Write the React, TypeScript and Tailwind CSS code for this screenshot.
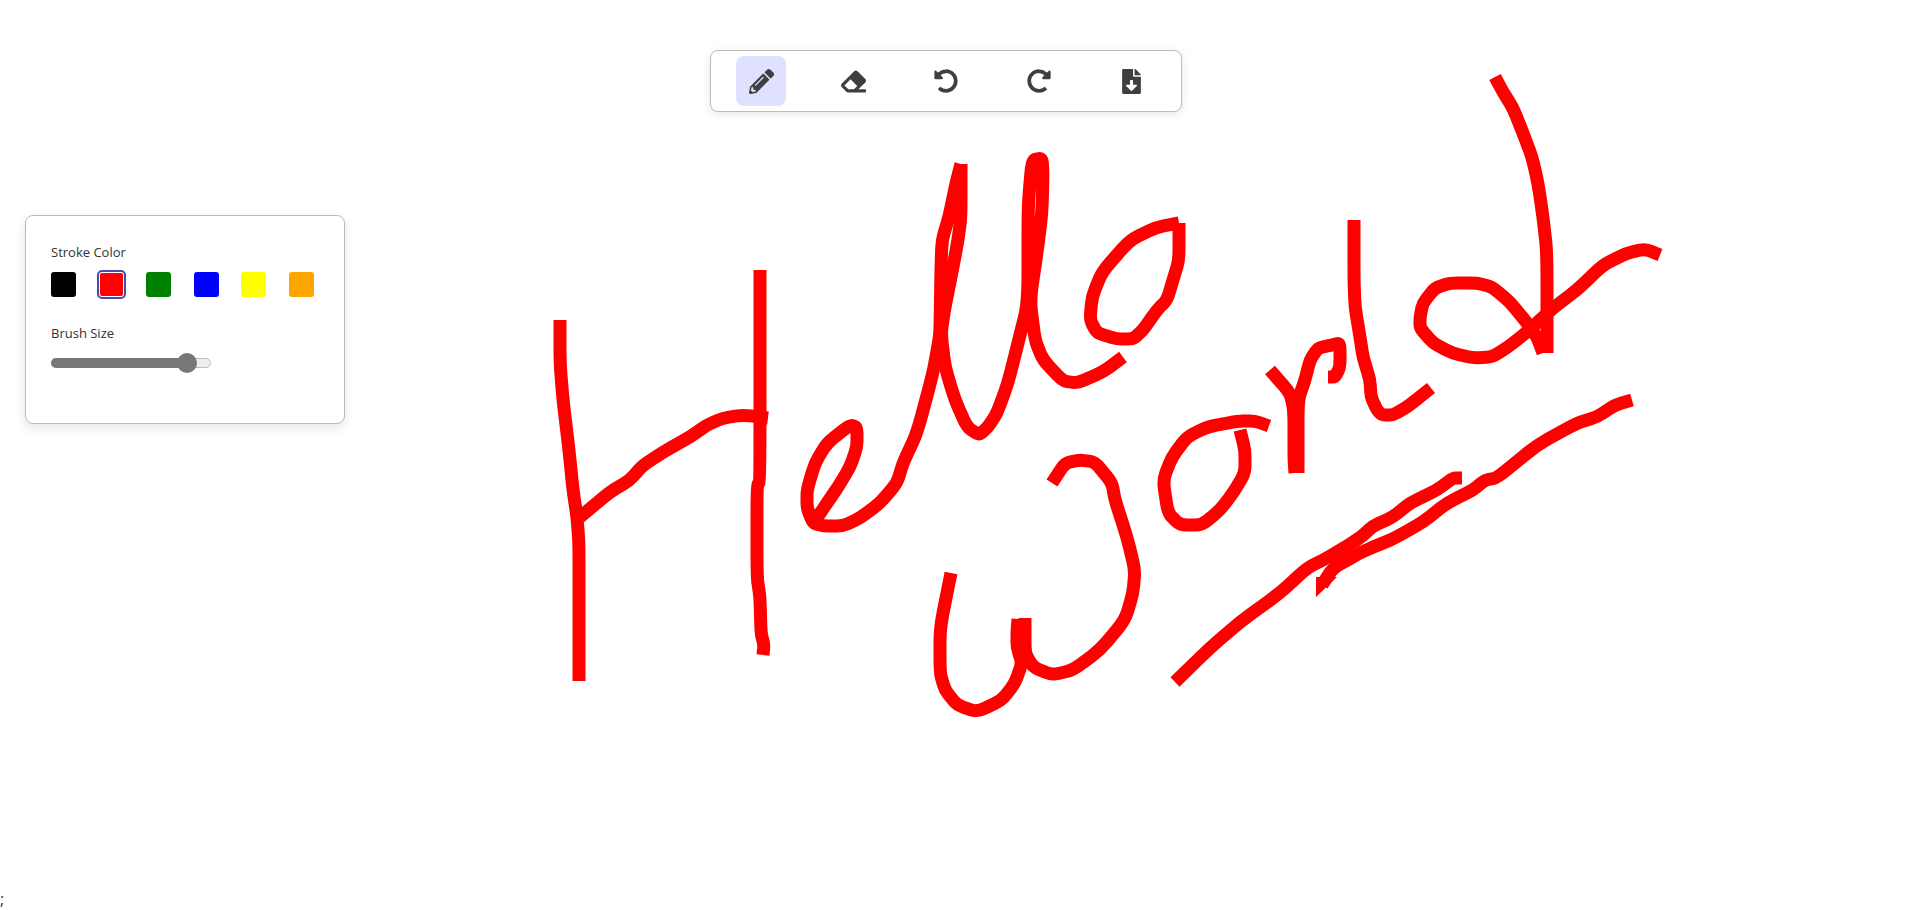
import { FaEraser, FaFileDownload, FaPencilAlt, FaRedoAlt, FaUndoAlt } from "react-icons/fa";

const strokes: number[][][] = [
  // H
  [[560,320],[560,363],[563,400],[569,450],[573,490],[577,517],[579,543],[579,600],[579,681]],
  [[580,517],[610,492],[630,480],[643,465],[670,448],[690,437],[707,425],[723,418],[743,415],[768,418]],
  [[760,270],[760,480],[757,487],[757,577],[760,597],[761,633],[764,645],[763,655]],
  // e + first l + second l
  [[817,518],[827,503],[838,487],[850,467],[857,447],[857,427],[850,425],[827,443],[815,463],[807,490],[807,508],[813,523],[823,526],[843,526],[860,518],[880,503],[897,483],[903,463],[917,433],[933,373],[939,340],[940,330],[941,267],[942,240],[949,217],[956,183],[961,164]],
  [[961,164],[961,217],[958,240],[953,267],[945,307],[941,333],[945,367],[955,400],[967,427],[979,435],[988,427],[997,413],[1008,383],[1017,347],[1028,303],[1028,207],[1032,160],[1042,158],[1043,173],[1042,213],[1037,253],[1030,300],[1035,340],[1043,360],[1063,381],[1077,383],[1103,372],[1123,357]],
  // o
  [[1179,223],[1179,260],[1173,280],[1167,300],[1157,310],[1143,330],[1133,339],[1117,339],[1097,333],[1090,320],[1092,297],[1102,272],[1130,240],[1157,227],[1179,223]],
  // W
  [[951,573],[940,628],[940,673],[945,690],[957,705],[977,712],[1002,700],[1015,683],[1022,663],[1017,647],[1017,632],[1018,619]],
  [[1025,618],[1025,653],[1033,667],[1052,675],[1073,670],[1100,650],[1125,620],[1133,593],[1135,570],[1127,537],[1115,500],[1112,483],[1095,462],[1080,460],[1065,463],[1052,483]],
  // o of World
  [[1240,430],[1245,450],[1245,473],[1233,493],[1220,510],[1202,525],[1180,525],[1168,513],[1163,480],[1172,457],[1187,437],[1207,427],[1238,421],[1255,421],[1269,426]],
  // r
  [[1270,370],[1290,393],[1294,410],[1294,460],[1295,473]],
  [[1298,473],[1298,400],[1305,380],[1310,360],[1318,348],[1332,345],[1340,343],[1340,367],[1335,377],[1328,377]],
  // l
  [[1354,220],[1354,280],[1355,307],[1360,337],[1363,357],[1370,380],[1371,397],[1377,410],[1382,415],[1393,415],[1407,407],[1431,388]],
  // d
  [[1495,77],[1503,92],[1513,108],[1523,133],[1532,157],[1538,183],[1543,217],[1547,253],[1547,353]],
  [[1543,353],[1537,337],[1527,323],[1510,302],[1492,287],[1477,283],[1450,283],[1435,288],[1423,303],[1420,317],[1420,328],[1433,343],[1452,353],[1473,358],[1492,357],[1508,347],[1527,332],[1553,308],[1577,290],[1603,265],[1627,253],[1645,249],[1660,255]],
  // underline
  [[1175,682],[1210,648],[1240,622],[1280,593],[1307,568],[1327,558],[1360,538],[1373,526],[1393,517],[1410,503],[1437,490],[1453,478],[1462,478]],
  [[1322,585],[1333,568],[1360,553],[1373,547],[1393,539],[1423,522],[1447,503],[1473,490],[1485,480],[1497,478],[1537,445],[1577,423],[1597,417],[1615,405],[1632,400]],
];

function toPath(s: number[][]) {
  let d = `M${s[0][0]} ${s[0][1]}`;
  for (let i = 1; i < s.length - 1; i++) {
    const [x, y] = s[i];
    const [px, py] = s[i - 1];
    const [nx, ny] = s[i + 1];
    d += ` L${x + (px - x) * 0.3} ${y + (py - y) * 0.3} Q${x} ${y} ${x + (nx - x) * 0.3} ${y + (ny - y) * 0.3}`;
  }
  const last = s[s.length - 1];
  return `${d} L${last[0]} ${last[1]}`;
}

const swatches = ["bg-[#000000]", "bg-[#ff0000]", "bg-[#008000]", "bg-[#0000ff]", "bg-[#ffff00]", "bg-[#ffa500]"];

export default function App() {
  return (
    <div className="flex h-screen flex-col overflow-hidden bg-white font-['Open_Sans',sans-serif] text-[#333]">
      <div className="relative flex-1">
        <svg className="absolute inset-0 h-full w-full" viewBox="0 0 1910 888">
          {strokes.map((s, i) => (
            <path key={i} d={toPath(s)} fill="none" stroke="#ff0000" strokeWidth={13} />
          ))}
          <polygon points="1316,577 1316,597 1337,577" fill="#ff0000" />
        </svg>

        <div className="absolute left-[710px] top-[50px] flex h-[62px] w-[472px] items-center justify-between rounded-lg border border-[#bbb] bg-white px-[25px] text-[#3f3f3f] shadow-[0_2px_10px_rgba(0,0,0,0.1)]">
          <button className="flex h-[50px] w-[50px] items-center justify-center rounded-lg bg-[#e0e0ff]">
            <FaPencilAlt size={25} />
          </button>
          <button className="flex h-[50px] w-[50px] items-center justify-center rounded-lg">
            <FaEraser size={25} />
          </button>
          <button className="flex h-[50px] w-[50px] items-center justify-center rounded-lg">
            <FaUndoAlt size={24} />
          </button>
          <button className="flex h-[50px] w-[50px] items-center justify-center rounded-lg">
            <FaRedoAlt size={24} />
          </button>
          <button className="flex h-[50px] w-[50px] items-center justify-center rounded-lg">
            <FaFileDownload size={25} />
          </button>
        </div>

        <div className="absolute left-[25px] top-[215px] h-[209px] w-[320px] rounded-lg border border-[#bbb] bg-white px-[25px] pt-[27px] shadow-[0_4px_12px_rgba(0,0,0,0.1)]">
          <div className="text-[13px] leading-[18px]">Stroke Color</div>
          <div className="mt-[11px] flex w-[263px] justify-between">
            {swatches.map((c, i) => (
              <button
                key={c}
                className={
                  i === 1
                    ? `h-[25px] w-[25px] rounded-[3px] border border-white outline-2 outline-[#4a4ab0] ${c}`
                    : `h-[25px] w-[25px] rounded-[3px] ${c}`
                }
              />
            ))}
          </div>
          <div className="mt-[27px] text-[13px] leading-[18px]">Brush Size</div>
          <div className="relative mt-[16px] h-[10px] w-[160px] rounded-full border border-[#bbb] bg-[#eee]">
            <div className="absolute -left-px -top-px h-[10px] w-[137px] rounded-full bg-[#777]" />
            <div className="absolute left-[125px] top-[-6px] h-[20px] w-[20px] rounded-full bg-[#777]" />
          </div>
        </div>
      </div>
      <div className="h-[22px] text-base leading-[22px]">;</div>
    </div>
  );
}
